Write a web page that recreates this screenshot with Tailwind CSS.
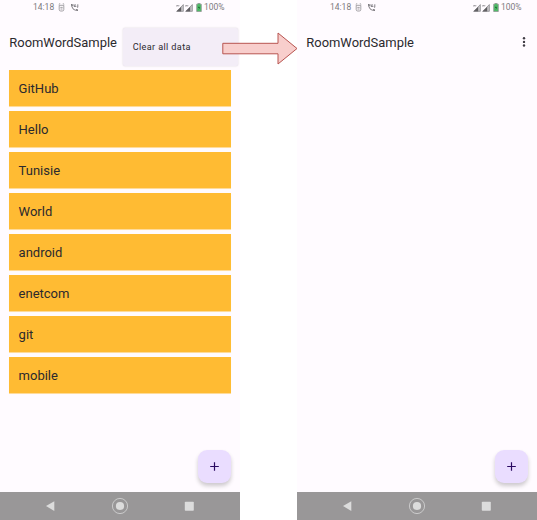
<!DOCTYPE html>
<html lang="en">
<head>
<meta charset="utf-8">
<title>RoomWordSample</title>
<script src="https://cdn.jsdelivr.net/npm/@tailwindcss/browser@4"></script>
</head>
<body class="w-[537px] h-[520px] overflow-hidden bg-white font-['Roboto',sans-serif] text-[#2b292e]">
<svg class="hidden">
  <symbol id="alarm" viewBox="0 0 7 9"><path d="M.8 1.300 2.200.5M6.200 1.300 4.800.5M1.200 2.300h4.600v4.200q0 1.500-1.500 1.500H2.700Q1.200 8 1.200 6.500ZM2.300 4.400h2.400M2.500 6h2" fill="none" stroke="#8d8b8f" stroke-width=".8"/></symbol>
  <symbol id="call" viewBox="0 0 9 9"><path d="M1 1C1 5.200 3.800 8 8 8V6.500L6.300 6.100 5.300 6.900Q3.200 5.800 2.200 3.700L2.900 2.800 2.500 1Z" fill="#77757a"/><path d="M4 1.200v2.200h2M4.200 3.200 6 1.500M7.800 1.300v3M6.600 3.400 7.800 4.500" fill="none" stroke="#77757a" stroke-width=".9"/></symbol>
  <symbol id="signal" viewBox="0 0 8 8"><path d="M7.600.3v7.300H.3Z" fill="#c9c7cb"/><path d="M5.200 2.700v4.900H.3Z" fill="#605e62"/><path d="M7.300.6v6.700H.9Z" fill="none" stroke="#77757a" stroke-width=".6"/><path d="M.4 1 1.900 2.500M1.900 1 .4 2.500M1.900 1.700h1.500" stroke="#858387" stroke-width=".7"/></symbol>
  <symbol id="battery" viewBox="0 0 6 9"><path d="M1.900.4h2.200v.8h1.200v7.400H.7V1.200h1.200Z" fill="#4fbd68" stroke="#8b898d" stroke-width=".7"/><path d="M3.300 2.600 2 5.100h1L2.700 7 4.100 4.300H3Z" fill="#145d2a"/></symbol>
</svg>
<div class="relative flex gap-[57px]">

  <main class="w-[240px] h-[520px] shrink-0 flex flex-col bg-[#fffbff]">
    <div class="h-[15px] shrink-0 flex items-center pl-[33px] pr-[16px] text-[8.500px] leading-[15px] text-[#7b797e]">
      <span class="w-[24px]">14:18</span>
      <svg class="w-[7px] h-[9px] ml-[1px]"><use href="#alarm"/></svg>
      <svg class="w-[9px] h-[9px] ml-[5px]"><use href="#call"/></svg>
      <svg class="w-[8px] h-[8px] ml-auto"><use href="#signal"/></svg>
      <svg class="w-[8px] h-[8px] ml-[1px]"><use href="#signal"/></svg>
      <svg class="w-[6px] h-[9px] ml-[3px]"><use href="#battery"/></svg>
      <span class="w-[20px] ml-[2px] whitespace-nowrap">100%</span>
    </div>
    <h1 class="h-[55px] shrink-0 pl-[9.300px] text-[12.950px] leading-[55px]">RoomWordSample</h1>
    <ul class="flex flex-col gap-[4.700px] pl-[9.300px] pr-[9.300px] text-[13px] leading-[37px]">
      <li class="h-[36.300px] pl-[9.300px] bg-[#ffbb33] shadow-[0_0.5px_0.5px_rgba(255,187,51,0.5)]">GitHub</li>
      <li class="h-[36.300px] pl-[9.300px] bg-[#ffbb33] shadow-[0_0.5px_0.5px_rgba(255,187,51,0.5)]">Hello</li>
      <li class="h-[36.300px] pl-[9.300px] bg-[#ffbb33] shadow-[0_0.5px_0.5px_rgba(255,187,51,0.5)]">Tunisie</li>
      <li class="h-[36.300px] pl-[9.300px] bg-[#ffbb33] shadow-[0_0.5px_0.5px_rgba(255,187,51,0.5)]">World</li>
      <li class="h-[36.300px] pl-[9.300px] bg-[#ffbb33] shadow-[0_0.5px_0.5px_rgba(255,187,51,0.5)]">android</li>
      <li class="h-[36.300px] pl-[9.300px] bg-[#ffbb33] shadow-[0_0.5px_0.5px_rgba(255,187,51,0.5)]">enetcom</li>
      <li class="h-[36.300px] pl-[9.300px] bg-[#ffbb33] shadow-[0_0.5px_0.5px_rgba(255,187,51,0.5)]">git</li>
      <li class="h-[36.300px] pl-[9.300px] bg-[#ffbb33] shadow-[0_0.5px_0.5px_rgba(255,187,51,0.5)]">mobile</li>
    </ul>
    <button class="mt-auto mb-[9px] mr-[9px] self-end size-[33px] rounded-[9px] bg-[#eaddff] shadow-[0_3px_4px_rgba(0,0,0,0.2)] flex items-center justify-center" aria-label="Add">
      <svg class="size-[9px]" viewBox="0 0 9 9"><path d="M4.500.2v8.600M.2 4.500h8.600" stroke="#2a0a62" stroke-width="1.200"/></svg>
    </button>
    <nav class="h-[28px] shrink-0 bg-[#999798]">
      <svg class="block w-[240px] h-[28px]" viewBox="0 0 240 28" fill="#dcdcdc"><path d="M46 14 54.300 9.300v9.700Z"/><circle cx="120" cy="14" r="4.100"/><circle cx="120" cy="14" r="7.600" fill="none" stroke="#cfcfcf" stroke-width=".9"/><rect x="184.800" y="9.800" width="9" height="9" rx=".8"/></svg>
    </nav>
  </main>

  <main class="w-[240px] h-[520px] shrink-0 flex flex-col bg-[#fffbff]">
    <div class="h-[15px] shrink-0 flex items-center pl-[33px] pr-[16px] text-[8.500px] leading-[15px] text-[#7b797e]">
      <span class="w-[24px]">14:18</span>
      <svg class="w-[7px] h-[9px] ml-[1px]"><use href="#alarm"/></svg>
      <svg class="w-[9px] h-[9px] ml-[5px]"><use href="#call"/></svg>
      <svg class="w-[8px] h-[8px] ml-auto"><use href="#signal"/></svg>
      <svg class="w-[8px] h-[8px] ml-[1px]"><use href="#signal"/></svg>
      <svg class="w-[6px] h-[9px] ml-[3px]"><use href="#battery"/></svg>
      <span class="w-[20px] ml-[2px] whitespace-nowrap">100%</span>
    </div>
    <header class="h-[55px] shrink-0 flex items-center justify-between pl-[9.300px] pr-[11px]">
      <h1 class="text-[12.950px] leading-[55px]">RoomWordSample</h1>
      <svg class="w-[4px] h-[10px] -mt-px" viewBox="0 0 4 10" fill="#3f3b43"><circle cx="2" cy="1.300" r="1.200"/><circle cx="2" cy="4.900" r="1.200"/><circle cx="2" cy="8.500" r="1.200"/></svg>
    </header>
    <button class="mt-auto mb-[9px] mr-[9px] self-end size-[33px] rounded-[9px] bg-[#eaddff] shadow-[0_3px_4px_rgba(0,0,0,0.2)] flex items-center justify-center" aria-label="Add">
      <svg class="size-[9px]" viewBox="0 0 9 9"><path d="M4.500.2v8.600M.2 4.500h8.600" stroke="#2a0a62" stroke-width="1.200"/></svg>
    </button>
    <nav class="h-[28px] shrink-0 bg-[#999798]">
      <svg class="block w-[240px] h-[28px]" viewBox="0 0 240 28" fill="#dcdcdc"><path d="M46 14 54.300 9.300v9.700Z"/><circle cx="120" cy="14" r="4.100"/><circle cx="120" cy="14" r="7.600" fill="none" stroke="#cfcfcf" stroke-width=".9"/><rect x="184.800" y="9.800" width="9" height="9" rx=".8"/></svg>
    </nav>
  </main>

  <div class="absolute left-[123px] top-[28px] w-[115px] h-[38px] pl-[9.700px] rounded-[2px] bg-[#f3edf7] shadow-[0_0_2px_rgba(0,0,0,0.16)] text-[9.100px] leading-[39px] tracking-[0.380px]">Clear all data</div>
  <svg class="absolute left-[222px] top-[32px] w-[76px] h-[33px]" viewBox="0 0 76 33"><path d="M.8 11.300H56V1L75 16.500 56 32V21.800H.8Z" fill="#f8cecc" stroke="#b85450" stroke-width="1"/></svg>
</div>
</body>
</html>
